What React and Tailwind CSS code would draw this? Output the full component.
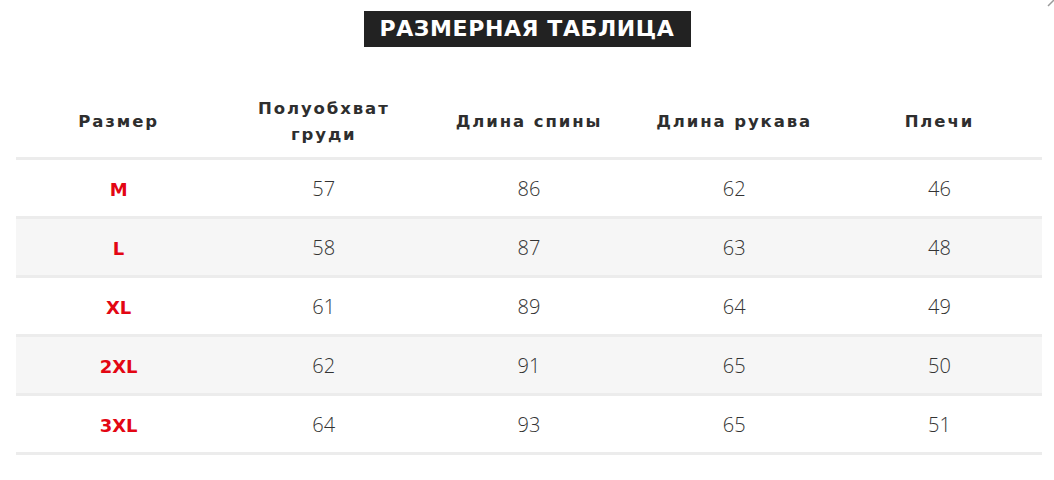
import React from 'react'

const columns = ['Размер', 'Полуобхват груди', 'Длина спины', 'Длина рукава', 'Плечи']

const rows = [
  ['M', 57, 86, 62, 46],
  ['L', 58, 87, 63, 48],
  ['XL', 61, 89, 64, 49],
  ['2XL', 62, 91, 65, 50],
  ['3XL', 64, 93, 65, 51],
]

export default function App() {
  return (
    <div className="relative w-[1054px] h-[480px] bg-white overflow-hidden font-['DejaVu_Sans',sans-serif] text-[#333]">
      {/* cut-off close icon in the corner */}
      <svg className="absolute right-0 top-0" width="8" height="8" viewBox="0 0 8 8">
        <path d="M8 0 L2 6" stroke="#9a9a9a" strokeWidth="1.5" />
      </svg>

      <div className="flex justify-center pt-[11px]">
        <h2 className="bg-[#222] text-white h-[36px] px-[16px] flex items-center text-[22px] font-bold tracking-[0.6px] leading-none">
          РАЗМЕРНАЯ ТАБЛИЦА
        </h2>
      </div>

      <div className="mx-[16px] mt-[39px] w-[1026px]">
        <div className="grid grid-cols-5 h-[71px] items-center">
          {columns.map((c) => (
            <div key={c} className="text-center text-[16.5px] font-bold tracking-[1.9px] leading-[26px] px-[14px] text-[#2e2e2e]">
              {c}
            </div>
          ))}
        </div>

        {rows.map((r, i) => (
          <div
            key={r[0]}
            className={`grid grid-cols-5 items-center border-t-[3px] border-[#ececec] pt-[2px] ${i % 2 === 1 ? 'bg-[#f6f6f6]' : 'bg-white'} ${i === rows.length - 1 ? 'border-b-[3px] h-[62px]' : 'h-[59px]'}`}
          >
            <div className="text-center text-[18px] font-bold text-[#e30613]">{r[0]}</div>
            {r.slice(1).map((v, j) => (
              <div key={j} className="text-center text-[20px] font-['Open_Sans',sans-serif] font-light text-[#333]">
                {v}
              </div>
            ))}
          </div>
        ))}
      </div>
    </div>
  )
}
